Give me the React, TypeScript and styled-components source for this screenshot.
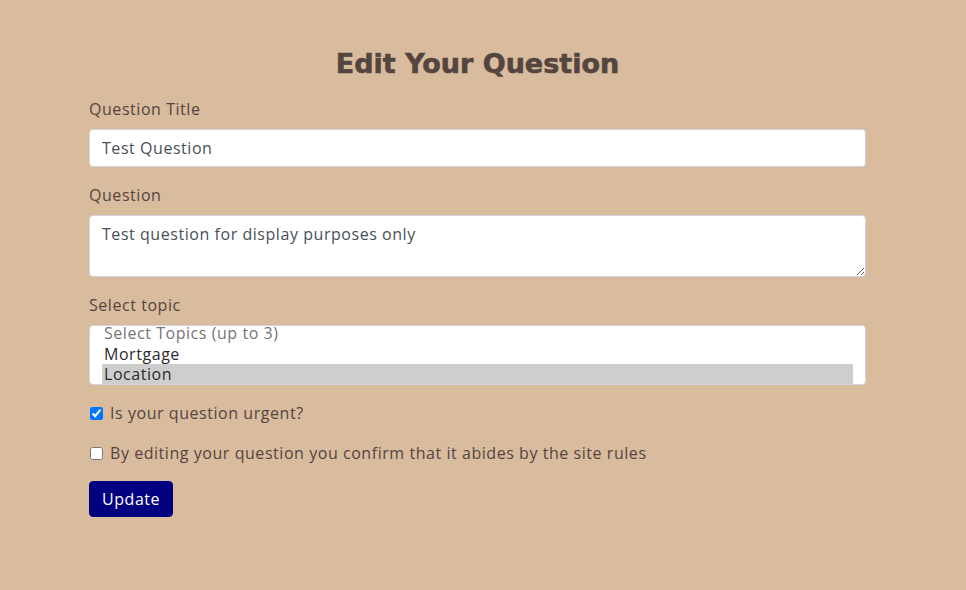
import React from "react";
import styled, { createGlobalStyle } from "styled-components";

const Global = createGlobalStyle`
  html, body { margin: 0; padding: 0; background: #d9bb9e; }
  body { font-family: "Open Sans", "Noto Sans", sans-serif; color: #54453e; letter-spacing: 0.55px; }
  * { box-sizing: border-box; }
`;

const Page = styled.div`
  min-height: 590px;
  background: #d9bb9e;
  padding-top: 41px;
`;

const Form = styled.form`
  width: 777px;
  margin-left: 89px;
  display: flex;
  flex-direction: column;
`;

const Heading = styled.h1`
  margin: 0 0 10px;
  text-align: center;
  font-family: "DejaVu Sans", sans-serif;
  font-weight: 700;
  font-size: 27px;
  line-height: 46px;
  color: #54453e;
  letter-spacing: 0;
  -webkit-text-stroke: 0.6px #54453e;
`;

const Group = styled.div`
  display: flex;
  flex-direction: column;
  margin-bottom: 16px;
`;

const Label = styled.label`
  font-size: 16px;
  line-height: 24px;
  margin-bottom: 8px;
  color: #54453e;
`;

const Input = styled.input`
  height: 38px;
  padding: 6px 12px;
  border: 1px solid #ced4da;
  border-radius: 4px;
  background: #fff;
  font: inherit;
  font-size: 16px;
  letter-spacing: 0.55px;
  color: #495057;
  outline: none;
`;

const TextArea = styled.textarea`
  height: 62px;
  padding: 6px 12px;
  border: 1px solid #ced4da;
  border-radius: 4px;
  background: #fff;
  font: inherit;
  font-size: 16px;
  line-height: 24px;
  letter-spacing: 0.55px;
  color: #495057;
  resize: vertical;
  outline: none;
`;

const ListBox = styled.div`
  height: 60px;
  border: 1px solid #ced4da;
  border-radius: 4px;
  background: #fff;
  padding: 0 12px;
  overflow: hidden;
`;

const OptionList = styled.div`
  margin-top: -3px;
  display: flex;
  flex-direction: column;
`;

const Option = styled.div<{ $muted?: boolean; $selected?: boolean }>`
  height: 20.5px;
  line-height: 20.5px;
  padding-left: 2px;
  font-size: 16px;
  color: ${(p) => (p.$muted ? "#757575" : "#2b2b2b")};
  background: ${(p) => (p.$selected ? "#cecece" : "transparent")};
`;

const CheckRow = styled.label`
  display: flex;
  align-items: center;
  height: 24px;
  margin-bottom: 16px;
  font-size: 16px;
  color: #54453e;
`;

const Check = styled.input`
  width: 13px;
  height: 13px;
  margin: 0 7px 0 1px;
`;

const Button = styled.button`
  align-self: flex-start;
  height: 36px;
  padding: 0 12px;
  border: 1px solid #000080;
  border-radius: 4px;
  background: #000080;
  color: #fff;
  font: inherit;
  font-size: 16px;
  letter-spacing: 0.55px;
`;

export default function App() {
  return (
    <Page>
      <Global />
      <Form onSubmit={(e) => e.preventDefault()}>
        <Heading>Edit Your Question</Heading>
        <Group>
          <Label>Question Title</Label>
          <Input defaultValue="Test Question" />
        </Group>
        <Group>
          <Label>Question</Label>
          <TextArea defaultValue="Test question for display purposes only" />
        </Group>
        <Group>
          <Label>Select topic</Label>
          <ListBox>
            <OptionList>
              <Option $muted>Select Topics (up to 3)</Option>
              <Option>Mortgage</Option>
              <Option $selected>Location</Option>
            </OptionList>
          </ListBox>
        </Group>
        <CheckRow>
          <Check type="checkbox" defaultChecked />
          Is your question urgent?
        </CheckRow>
        <CheckRow>
          <Check type="checkbox" />
          By editing your question you confirm that it abides by the site rules
        </CheckRow>
        <Button type="submit">Update</Button>
      </Form>
    </Page>
  );
}
